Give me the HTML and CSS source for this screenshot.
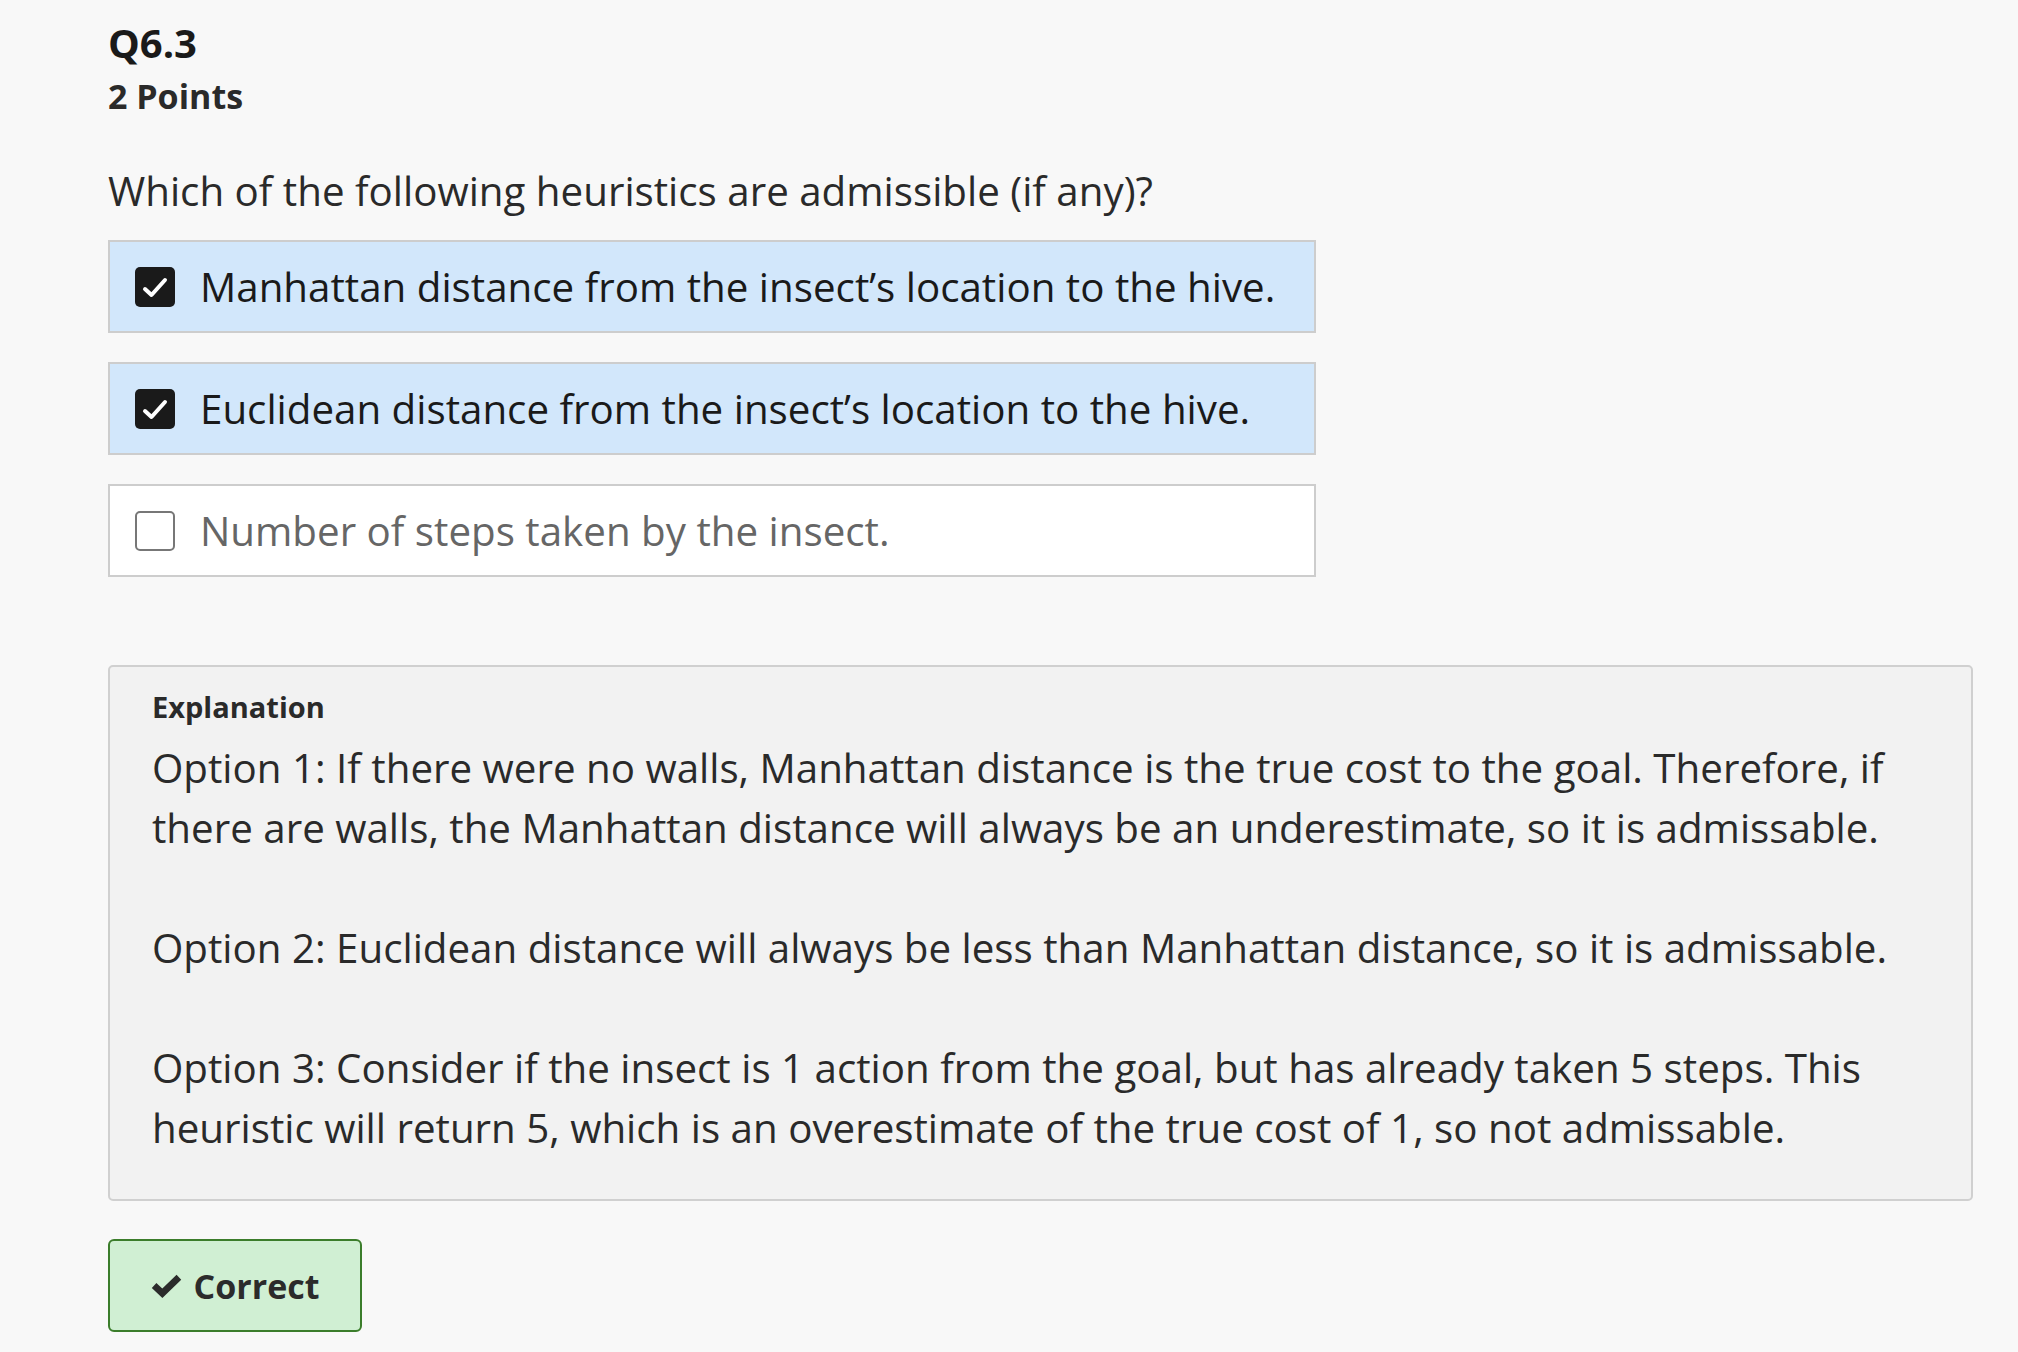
FILE: index.html
```html
<!DOCTYPE html>
<html lang="en">
<head>
<meta charset="utf-8">
<title>Q6.3</title>
<link rel="stylesheet" href="styles.css">
</head>
<body>
<main class="question">
  <header class="q-header">
    <h1 class="q-title">Q6.3</h1>
    <div class="q-points">2 Points</div>
  </header>
  <p class="q-prompt">Which of the following heuristics are admissible (if any)?</p>
  <ul class="options">
    <li class="option option--checked">
      <span class="box box--checked"><svg viewBox="0 0 40 40" width="40" height="40"><polyline points="10,22 16.5,28 30,13" fill="none" stroke="#fff" stroke-width="4" stroke-linecap="round" stroke-linejoin="round"/></svg></span>
      <span class="option-text">Manhattan distance from the insect’s location to the hive.</span>
    </li>
    <li class="option option--checked">
      <span class="box box--checked"><svg viewBox="0 0 40 40" width="40" height="40"><polyline points="10,22 16.5,28 30,13" fill="none" stroke="#fff" stroke-width="4" stroke-linecap="round" stroke-linejoin="round"/></svg></span>
      <span class="option-text">Euclidean distance from the insect’s location to the hive.</span>
    </li>
    <li class="option">
      <span class="box"></span>
      <span class="option-text option-text--muted">Number of steps taken by the insect.</span>
    </li>
  </ul>
  <section class="explanation">
    <div class="explanation-label">Explanation</div>
    <p class="explanation-para">Option 1: If there were no walls, Manhattan distance is the true cost to the goal. Therefore, if there are walls, the Manhattan distance will always be an underestimate, so it is admissable.</p>
    <p class="explanation-para">Option 2: Euclidean distance will always be less than Manhattan distance, so it is admissable.</p>
    <p class="explanation-para">Option 3: Consider if the insect is 1 action from the goal, but has already taken 5 steps. This heuristic will return 5, which is an overestimate of the true cost of 1, so not admissable.</p>
  </section>
  <div class="result">
    <span class="result-badge">
      <svg class="result-icon" viewBox="0 0 30 24" width="31" height="25"><polyline points="3,12 11,19.5 27,4" fill="none" stroke="#2b2b2b" stroke-width="6.5" stroke-linejoin="miter" stroke-linecap="butt"/></svg>
      <span>Correct</span>
    </span>
  </div>
</main>
</body>
</html>
```
FILE: styles.css
```css
* { box-sizing: border-box; }
html, body {
  margin: 0;
  padding: 0;
  background: #f8f8f8;
}
body {
  font-family: "Open Sans", "Noto Sans", sans-serif;
  color: #1f1f1f;
}
.question {
  padding: 16px 0 0 108px;
  width: 1973px;
}
.q-header { margin: 0; }
.q-title {
  margin: 0;
  font-size: 40px;
  font-weight: 700;
  line-height: 54px;
  color: #1a1a1a;
}
.q-points {
  font-size: 34px;
  font-weight: 700;
  line-height: 52px;
  color: #2a2a2a;
}
.q-prompt {
  margin: 43px 0 0;
  font-size: 40.3px;
  line-height: 52px;
  color: #2a2a2a;
}
.options {
  list-style: none;
  margin: 23px 0 0;
  padding: 0;
  width: 1208px;
  display: flex;
  flex-direction: column;
  gap: 29px;
}
.option {
  height: 93px;
  display: flex;
  align-items: center;
  gap: 25px;
  padding: 0 25px;
  border: 2px solid #cdcdcd;
  background: #ffffff;
}
.option--checked { background: #d2e7fb; }
.box {
  width: 40px;
  height: 40px;
  flex: none;
  border: 2px solid #777;
  border-radius: 5px;
  background: #fff;
  display: flex;
}
.box--checked {
  border: none;
  background: #1a1a1a;
}
.option-text {
  font-size: 40.3px;
  line-height: 52px;
  color: #1a1a1a;
}
.option-text--muted { color: #666; }
.explanation {
  margin-top: 88px;
  border: 2px solid #d0d0d0;
  border-radius: 5px;
  background: #f2f2f2;
  padding: 20px 42px 41px;
}
.explanation-label {
  font-size: 29px;
  font-weight: 700;
  line-height: 40px;
  margin-bottom: 11px;
  color: #2a2a2a;
}
.explanation-para {
  margin: 0 0 60px;
  font-size: 40.3px;
  line-height: 60px;
  color: #2a2a2a;
}
.explanation-para:last-child { margin-bottom: 0; }
.result { margin-top: 38px; }
.result-badge {
  display: inline-flex;
  align-items: center;
  justify-content: center;
  gap: 12px;
  width: 254px;
  height: 93px;
  border: 2px solid #3b7d2b;
  border-radius: 6px;
  background: #d0efd3;
  font-size: 34px;
  font-weight: 700;
  color: #2b2b2b;
}
.result-icon { flex: none; }
```
